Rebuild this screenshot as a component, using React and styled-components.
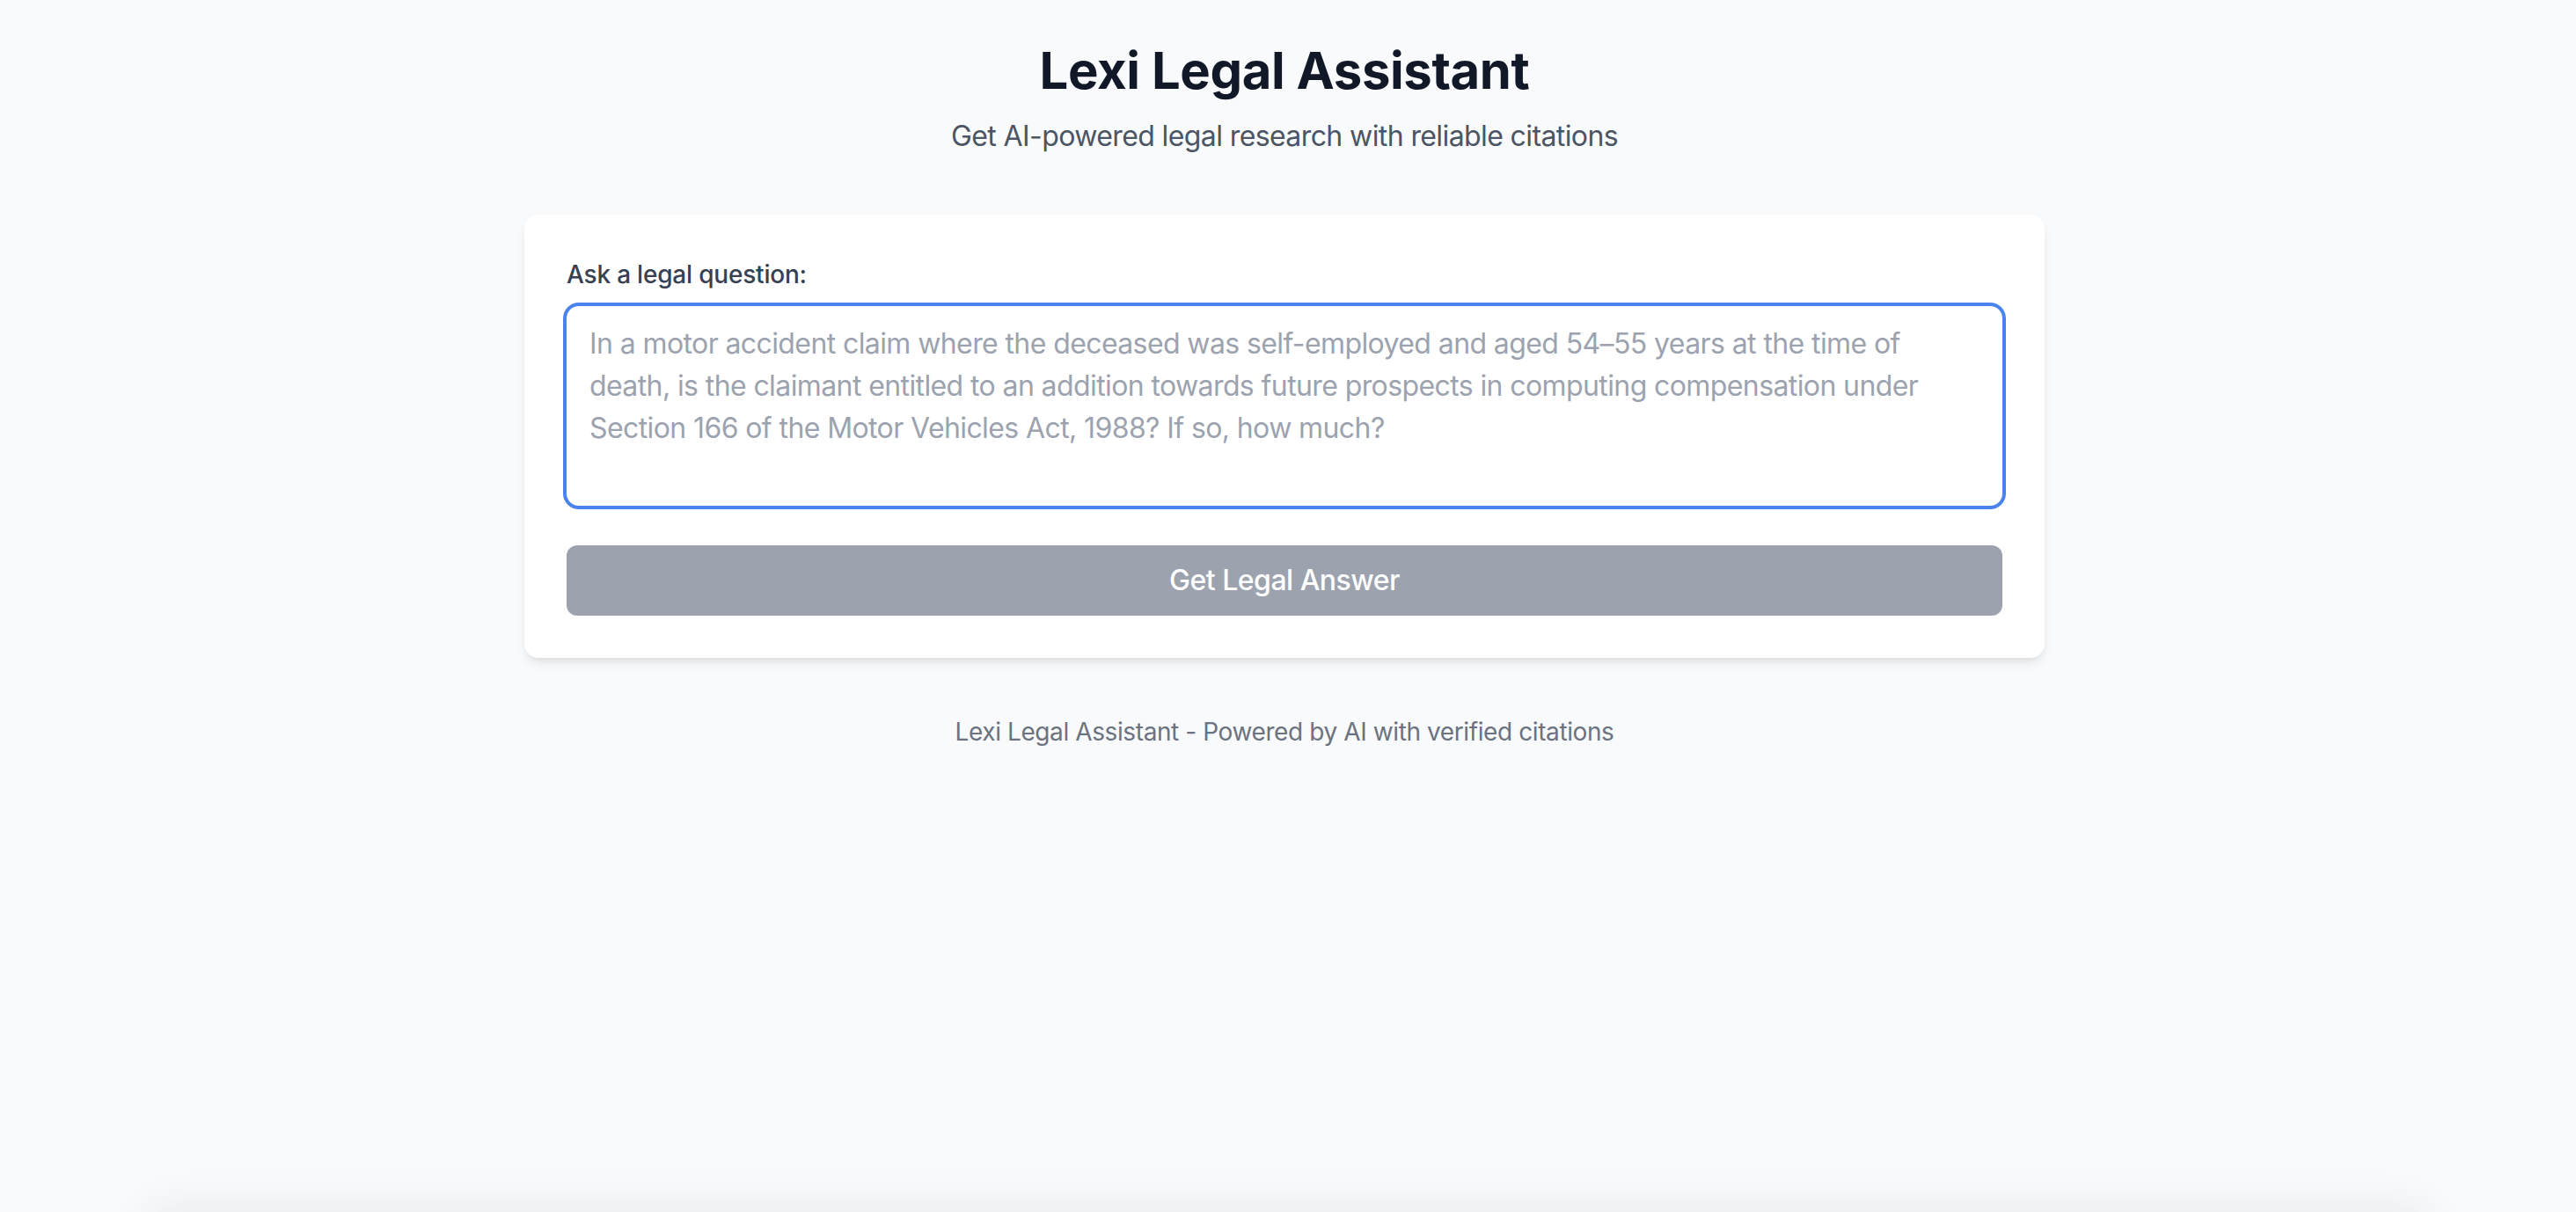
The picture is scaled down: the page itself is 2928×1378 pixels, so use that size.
import React, { useState } from 'react';
import styled, { createGlobalStyle } from 'styled-components';

const GlobalStyle = createGlobalStyle`
  * {
    box-sizing: border-box;
  }
  html, body {
    margin: 0;
    padding: 0;
    background: #f9fafb;
    font-family: Inter, "Noto Sans", "Liberation Sans", sans-serif;
    -webkit-font-smoothing: antialiased;
  }
`;

const Page = styled.div`
  min-height: 100vh;
  padding-right: 8px;
  background: #f9fafb;
`;

const Container = styled.main`
  max-width: 1792px;
  margin: 0 auto;
  padding: 44px 32px 64px;
`;

const Header = styled.header`
  text-align: center;
  margin-bottom: 61px;
`;

const Title = styled.h1`
  margin: 0 0 11px;
  font-size: 58px;
  line-height: 72px;
  font-weight: 700;
  color: #111827;
  letter-spacing: -0.4px;
`;

const Subtitle = styled.p`
  margin: 0;
  font-size: 32px;
  line-height: 56px;
  letter-spacing: -0.6px;
  color: #4b5563;
`;

const Card = styled.section`
  width: 1728px;
  margin: 0 auto;
  background: #ffffff;
  border-radius: 16px;
  padding: 48px;
  box-shadow: 0 8px 12px -2px rgba(0, 0, 0, 0.08), 0 4px 8px -4px rgba(0, 0, 0, 0.08);
`;

const Label = styled.label`
  display: block;
  margin-bottom: 16px;
  font-size: 28px;
  line-height: 40px;
  font-weight: 500;
  letter-spacing: -0.2px;
  color: #374151;
`;

const TextArea = styled.textarea`
  display: block;
  width: 100%;
  height: 227px;
  margin: 0 0 45px;
  padding: 17px 24px 24px;
  border: 2px solid transparent;
  border-radius: 14px;
  box-shadow: 0 0 0 4px #4a83ee;
  outline: none;
  resize: none;
  font-family: inherit;
  font-size: 32px;
  line-height: 48px;
  letter-spacing: -0.6px;
  color: #111827;
  background: #ffffff;
  caret-color: #000;

  &::placeholder {
    color: #9ca3af;
  }
`;

const SubmitButton = styled.button`
  display: block;
  width: 100%;
  height: 80px;
  padding: 16px 32px;
  border: none;
  border-radius: 12px;
  background: ${props => (props.disabled ? '#9ca3af' : '#2563eb')};
  color: #ffffff;
  font-family: inherit;
  font-size: 32px;
  line-height: 48px;
  font-weight: 500;
  letter-spacing: -0.5px;
  cursor: ${props => (props.disabled ? 'not-allowed' : 'pointer')};
`;

const Footer = styled.footer`
  margin-top: 64px;
  text-align: center;
  font-size: 28px;
  line-height: 40px;
  letter-spacing: -0.4px;
  color: #6b7280;
`;

// shadow of a panel sitting just under the fold
const FoldShadow = styled.div`
  position: fixed;
  left: 160px;
  right: 160px;
  top: 100%;
  height: 80px;
  border-radius: 40px;
  box-shadow: 0 -6px 50px rgba(17, 24, 39, 0.07);
  pointer-events: none;
`;

const PLACEHOLDER =
  'In a motor accident claim where the deceased was self-employed and aged 54–55 years at the time of death, is the claimant entitled to an addition towards future prospects in computing compensation under Section 166 of the Motor Vehicles Act, 1988? If so, how much?';

const App = () => {
  const [question, setQuestion] = useState('');

  return (
    <Page>
      <GlobalStyle />
      <Container>
        <Header>
          <Title>Lexi Legal Assistant</Title>
          <Subtitle>Get AI-powered legal research with reliable citations</Subtitle>
        </Header>
        <Card>
          <Label htmlFor="question">Ask a legal question:</Label>
          <TextArea
            id="question"
            autoFocus
            value={question}
            placeholder={PLACEHOLDER}
            onChange={e => setQuestion(e.target.value)}
          />
          <SubmitButton disabled={!question.trim()}>Get Legal Answer</SubmitButton>
        </Card>
        <Footer>Lexi Legal Assistant - Powered by AI with verified citations</Footer>
      </Container>
      <FoldShadow />
    </Page>
  );
};

export default App;
